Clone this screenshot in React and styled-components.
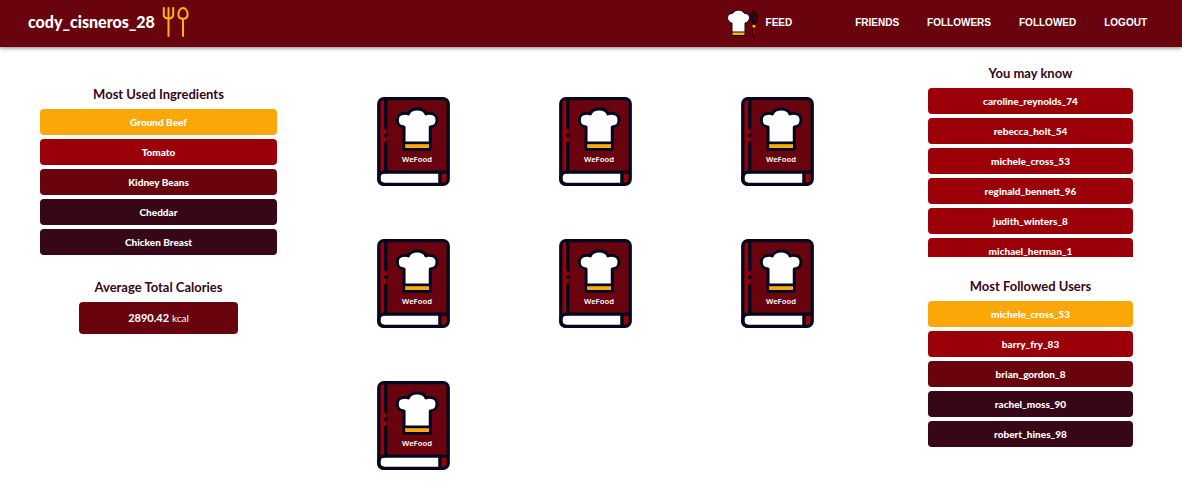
import React from "react";
import styled, { createGlobalStyle } from "styled-components";

const colors = {
  amber: "#fca708",
  red: "#9b0008",
  maroon: "#69040f",
  plum: "#370617",
  ink: "#03071e",
};

const GlobalStyle = createGlobalStyle`
  *, *::before, *::after { box-sizing: border-box; }
  body {
    margin: 0;
    background: #fff;
    color: ${colors.plum};
    font-family: Lato, "Open Sans", sans-serif;
  }
`;

const Header = styled.header`
  display: flex;
  align-items: center;
  justify-content: space-between;
  height: 47px;
  padding: 0 35px 0 28px;
  background: ${colors.maroon};
  color: #fff;
  box-shadow: 0 1px 4px rgba(0, 0, 0, 0.5);
`;

const Brand = styled.a`
  display: flex;
  align-items: center;
  gap: 7px;
  padding-bottom: 3px;
  color: #fff;
  font-size: 16px;
  font-weight: 900;
  line-height: 24px;
  text-decoration: none;
`;

const Nav = styled.nav`
  display: flex;
  align-items: center;
  gap: 28px;
  padding-bottom: 2px;
`;

const NavLink = styled.a`
  display: flex;
  align-items: center;
  gap: 8px;
  margin-right: ${(p) => (p.$wide ? "35px" : "0")};
  color: #fff;
  font-family: "Liberation Sans", Arial, sans-serif;
  font-size: 10px;
  font-weight: 700;
  line-height: 16px;
  text-decoration: none;
`;

const Page = styled.main`
  display: grid;
  grid-template-columns: 322fr 546fr 314fr;
  align-items: start;
`;

const Side = styled.aside`
  display: flex;
  flex-direction: column;
  gap: ${(p) => (p.$right ? "21px" : "24px")};
  padding: ${(p) => (p.$right ? "18px 49px 24px 60px" : "39px 45px 24px 40px")};
`;

const Panel = styled.section`
  display: flex;
  flex-direction: column;
  gap: 7px;
`;

const Title = styled.h2`
  margin: 0;
  font-size: 13px;
  font-weight: 700;
  line-height: 16px;
  text-align: center;
`;

const List = styled.ul`
  display: flex;
  flex-direction: column;
  gap: 4px;
  max-height: ${(p) => (p.$clipped ? "169px" : "none")};
  margin: 0;
  padding: 0;
  overflow: hidden;
  list-style: none;
`;

const Item = styled.li`
  flex: none;
  height: 26px;
  border-radius: 4px;
  background: ${(p) => colors[p.$tone]};
  color: #fff;
  font-size: 10px;
  font-weight: 900;
  line-height: 26px;
  text-align: center;
`;

const ItemLink = styled.a`
  display: block;
  color: inherit;
  text-decoration: none;
`;

const Calories = styled.p`
  align-self: center;
  width: 67%;
  margin: 0;
  border-radius: 4px;
  background: ${colors.maroon};
  color: #fff;
  font-size: 11px;
  line-height: 31px;
  text-align: center;
`;

const Unit = styled.span`
  font-size: 10px;
`;

const Shelf = styled.section`
  display: grid;
  grid-template-columns: repeat(3, 1fr);
  row-gap: 53px;
  justify-items: center;
  padding: 50px 0 24px;
`;

const BookLink = styled.a`
  display: block;
  height: 89px;
`;

const BookTitle = styled.text`
  fill: #fff;
  font-family: "Noto Sans", sans-serif;
  font-size: 23px;
  font-weight: 600;
  text-anchor: middle;
`;

function Cutlery() {
  return (
    <svg width="27" height="32" viewBox="0 0 27 32" fill="none" stroke="#fdb30b" strokeWidth="2" strokeLinecap="round" aria-hidden="true">
      <path d="M1.800 2v6.500q0 4 4.700 4t4.700-4V2M6.500 2v28" />
      <path d="M21 2c-2.800 0-4.600 3.200-4.600 6.200s1.600 4.600 4.600 4.600 4.600-1.600 4.600-4.600S23.800 2 21 2zM21 13v17" />
    </svg>
  );
}

function ChefIcon() {
  return (
    <svg width="31" height="28" viewBox="0 0 31 28" aria-hidden="true">
      <path d="M5 14C-1 13 -1 4 5.500 4.500C8 0 15 0 17.500 4.500C24 4 24 13 18 14V26.500H5z" fill="#fff" stroke="#16060c" strokeLinejoin="round" />
      <path d="M5 23h13v3.500H5z" fill="#fdb300" stroke="#16060c" />
      <path d="M27 2c-4.500 1-4.500 9-1.500 13h3c3-4 3-12-1.500-13zM27 3v12M25 4.500q-.5 5 1 10M29 4.500q.5 5-1 10" fill="#4a0510" stroke="#16060c" />
      <rect x="25.500" y="17" width="3" height="10" rx="1.500" fill={colors.red} stroke="#16060c" />
      <path d="M25.500 16h3v2.500h-3z" fill="#fdb300" />
    </svg>
  );
}

function Book() {
  return (
    <svg width="73" height="89" viewBox="34 35 219 268" role="img" aria-label="WeFood recipe book">
      <rect x="39" y="40" width="209" height="258" rx="15" fill={colors.maroon} />
      <path d="M60 40H54q-15 0-15 15V276q2-15 16-15h5z" fill={colors.red} />
      <path d="M248 261H56q-17 0-17 18.500T56 298H233q15 0 15-15z" fill="#fff" />
      <path d="M223 261h25v22q0 15-15 15h-10z" fill={colors.red} />
      <rect x="39" y="40" width="209" height="258" rx="15" fill="none" stroke={colors.ink} strokeWidth="10" />
      <path d="M248 261H56q-17 0-17 18.500T56 298M223 261v37" fill="none" stroke={colors.ink} strokeWidth="10" />
      <path d="M60 40v88M60 173v88" fill="none" stroke={colors.ink} strokeWidth="10" strokeLinecap="round" />
      <circle cx="60" cy="150" r="6" fill={colors.ink} />
      <path d="M115 125C89 124 88 88 112 85Q121 83 128 86C135 66 174 66 181 86Q188 83 197 85C221 88 220 124 194 125V192H115z" fill="#fff" stroke={colors.ink} strokeWidth="9" strokeLinejoin="round" />
      <path d="M119 175h71v13h-71z" fill={colors.amber} />
      <path d="M115 173h79" stroke={colors.ink} strokeWidth="8" />
      <BookTitle x="154" y="232">WeFood</BookTitle>
    </svg>
  );
}

const tones = ["amber", "red", "maroon", "plum", "plum"];
const ingredients = ["Ground Beef", "Tomato", "Kidney Beans", "Cheddar", "Chicken Breast"];
const suggestions = [
  "caroline_reynolds_74",
  "rebecca_holt_54",
  "michele_cross_53",
  "reginald_bennett_96",
  "judith_winters_8",
  "michael_herman_1",
];
const mostFollowed = ["michele_cross_53", "barry_fry_83", "brian_gordon_8", "rachel_moss_90", "robert_hines_98"];
const books = [1, 2, 3, 4, 5, 6, 7];

export default function App() {
  return (
    <>
      <GlobalStyle />
      <Header>
        <Brand href="#profile">
          cody_cisneros_28
          <Cutlery />
        </Brand>
        <Nav>
          <NavLink href="#feed" $wide>
            <ChefIcon />
            FEED
          </NavLink>
          <NavLink href="#friends">FRIENDS</NavLink>
          <NavLink href="#followers">FOLLOWERS</NavLink>
          <NavLink href="#followed">FOLLOWED</NavLink>
          <NavLink href="#logout">LOGOUT</NavLink>
        </Nav>
      </Header>
      <Page>
        <Side>
          <Panel>
            <Title>Most Used Ingredients</Title>
            <List>
              {ingredients.map((name, i) => (
                <Item key={name} $tone={tones[i]}>{name}</Item>
              ))}
            </List>
          </Panel>
          <Panel>
            <Title>Average Total Calories</Title>
            <Calories>
              <strong>2890.42</strong> <Unit>kcal</Unit>
            </Calories>
          </Panel>
        </Side>
        <Shelf>
          {books.map((id) => (
            <BookLink key={id} href={`#book-${id}`}>
              <Book />
            </BookLink>
          ))}
        </Shelf>
        <Side $right>
          <Panel>
            <Title>You may know</Title>
            <List $clipped>
              {suggestions.map((name) => (
                <Item key={name} $tone="red">
                  <ItemLink href={`#${name}`}>{name}</ItemLink>
                </Item>
              ))}
            </List>
          </Panel>
          <Panel>
            <Title>Most Followed Users</Title>
            <List>
              {mostFollowed.map((name, i) => (
                <Item key={name} $tone={tones[i]}>
                  <ItemLink href={`#${name}`}>{name}</ItemLink>
                </Item>
              ))}
            </List>
          </Panel>
        </Side>
      </Page>
    </>
  );
}
